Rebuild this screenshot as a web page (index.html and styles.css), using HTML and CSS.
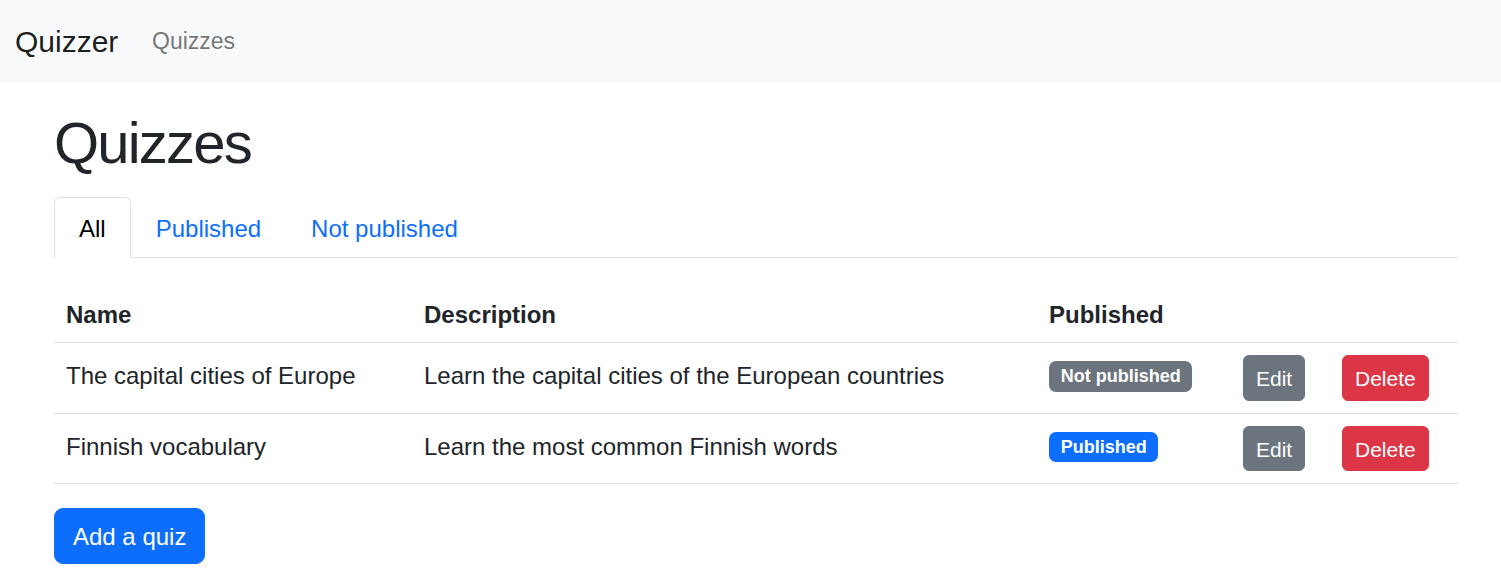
FILE: index.html
```html
<!DOCTYPE html>
<html lang="en">
<head>
<meta charset="utf-8">
<title>Quizzer</title>
<link rel="stylesheet" href="styles.css">
</head>
<body>
<nav class="navbar">
  <a class="brand" href="#">Quizzer</a>
  <a class="nav-link" href="#">Quizzes</a>
</nav>
<main class="container">
  <h1 class="title">Quizzes</h1>
  <ul class="tabs">
    <li><a class="tab active" href="#">All</a></li>
    <li><a class="tab" href="#">Published</a></li>
    <li><a class="tab" href="#">Not published</a></li>
  </ul>
  <table class="quiz-table">
    <colgroup>
      <col class="c-name">
      <col class="c-desc">
      <col class="c-pub">
      <col class="c-edit">
      <col class="c-del">
    </colgroup>
    <thead>
      <tr><th>Name</th><th>Description</th><th>Published</th><th></th><th></th></tr>
    </thead>
    <tbody>
      <tr>
        <td>The capital cities of Europe</td>
        <td>Learn the capital cities of the European countries</td>
        <td><span class="badge badge-grey">Not published</span></td>
        <td><button class="btn-sm btn-grey">Edit</button></td>
        <td><button class="btn-sm btn-red">Delete</button></td>
      </tr>
      <tr>
        <td>Finnish vocabulary</td>
        <td>Learn the most common Finnish words</td>
        <td><span class="badge badge-blue">Published</span></td>
        <td><button class="btn-sm btn-grey">Edit</button></td>
        <td><button class="btn-sm btn-red">Delete</button></td>
      </tr>
    </tbody>
  </table>
  <button class="btn-primary">Add a quiz</button>
</main>
</body>
</html>
```
FILE: styles.css
```css
* { box-sizing: border-box; }
html, body { margin: 0; padding: 0; }
body {
  font-family: "Liberation Sans", Arial, sans-serif;
  font-size: 24px;
  line-height: 1.5;
  color: #212529;
  background: #fff;
}
a { text-decoration: none; }

.navbar {
  height: 82px;
  background: #f8f9fa;
  display: flex;
  align-items: center;
  padding: 0 15px;
}
.brand {
  width: 137px;
  font-size: 30px;
  color: rgba(0, 0, 0, 0.9);
}
.nav-link {
  font-size: 23px;
  color: rgba(0, 0, 0, 0.55);
}

.container {
  width: 1404px;
  margin-left: 54px;
}
.title {
  margin: 25px 0 18px;
  font-size: 58px;
  letter-spacing: -1.8px;
  line-height: 72px;
  font-weight: 400;
}

.tabs {
  list-style: none;
  margin: 0;
  padding: 0;
  display: flex;
  border-bottom: 1px solid #dee2e6;
}
.tab {
  display: block;
  margin-bottom: -1px;
  padding: 13px 24px 11px;
  line-height: 35px;
  border: 1px solid transparent;
  border-radius: 6px 6px 0 0;
  color: #0d6efd;
}
.tab.active {
  color: #000;
  background: #fff;
  border-color: #dee2e6 #dee2e6 #fff;
}

.quiz-table {
  margin-top: 24px;
  width: 1404px;
  border-collapse: collapse;
  table-layout: fixed;
}
.c-name { width: 358px; }
.c-desc { width: 625px; }
.c-pub { width: 194px; }
.c-edit { width: 99px; }
.c-del { width: 128px; }
.quiz-table th,
.quiz-table td {
  padding: 15px 12px 9px;
  text-align: left;
  vertical-align: top;
  border-bottom: 1px solid #dee2e6;
  line-height: 36px;
}
.quiz-table th { font-weight: 700; }

.badge {
  display: inline-block;
  vertical-align: top;
  margin-top: 3px;
  padding: 6.3px 11.7px;
  font-size: 18px;
  font-weight: 700;
  line-height: 1;
  color: #fff;
  border-radius: 7px;
}
.badge-grey { background: #6c757d; }
.badge-blue { background: #0d6efd; }

.btn-sm {
  display: inline-block;
  vertical-align: top;
  margin: -3px 0 3px;
  font-family: inherit;
  font-size: 21px;
  line-height: 31.5px;
  padding: 7px 12px 5px;
  border-radius: 6px;
  color: #fff;
  border: 1px solid transparent;
}
.btn-grey { background: #6c757d; border-color: #6c757d; }
.btn-red { background: #dc3545; border-color: #dc3545; }

.btn-primary {
  margin-top: 24px;
  font-family: inherit;
  font-size: 24px;
  line-height: 36px;
  padding: 10px 18px 8px;
  border-radius: 9px;
  color: #fff;
  background: #0d6efd;
  border: 1px solid #0d6efd;
}
```
